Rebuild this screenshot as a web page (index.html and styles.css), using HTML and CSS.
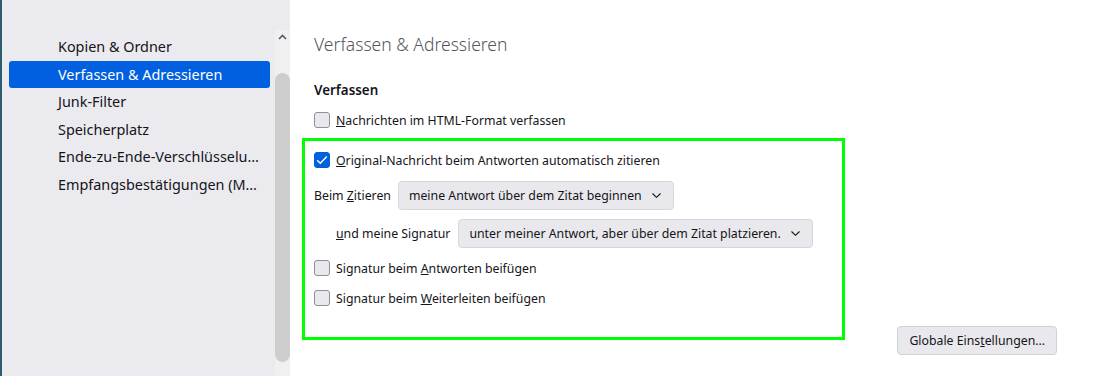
FILE: index.html
```html
<!DOCTYPE html>
<html lang="de">
<head>
    <meta charset="UTF-8">
    <title>Einstellungen - Verfassen &amp; Adressieren</title>
    <link rel="stylesheet" href="styles.css">
</head>
<body>

    <div class="window">
        <div class="sidebar">
            <ul class="nav">
                <li class="nav-item">Kopien &amp; Ordner</li>
                <li class="nav-item selected">Verfassen &amp; Adressieren</li>
                <li class="nav-item">Junk-Filter</li>
                <li class="nav-item">Speicherplatz</li>
                <li class="nav-item">Ende-zu-Ende-Verschlüsselu…</li>
                <li class="nav-item">Empfangsbestätigungen (M…</li>
            </ul>
            <div class="scrollbar">
                <div class="scroll-arrow">
                    <svg width="9" height="6" viewBox="0 0 9 6"><path d="M1 5 L4.5 1.5 L8 5" fill="none" stroke="#5b5b66" stroke-width="1.6"/></svg>
                </div>
                <div class="scroll-track">
                    <div class="scroll-thumb"></div>
                </div>
            </div>
        </div>

        <div class="content">
            <h1 class="page-title">Verfassen &amp; Adressieren</h1>
            <h2 class="section-title">Verfassen</h2>

            <label class="check-row">
                <span class="checkbox"></span>
                <span><u>N</u>achrichten im HTML-Format verfassen</span>
            </label>

            <div class="group">
                <label class="check-row">
                    <span class="checkbox checked">
                        <svg width="12" height="10" viewBox="0 0 12 10"><path d="M1.2 5.2 L4.3 8.2 L10.8 1.4" fill="none" stroke="#fff" stroke-width="1.4"/></svg>
                    </span>
                    <span><u>O</u>riginal-Nachricht beim Antworten automatisch zitieren</span>
                </label>

                <div class="select-row">
                    <span class="select-label">Beim <u>Z</u>itieren</span>
                    <div class="select">
                        <span>meine Antwort über dem Zitat beginnen</span>
                        <svg width="9" height="5" viewBox="0 0 9 5"><path d="M0.5 0.5 L4.5 4.3 L8.5 0.5" fill="none" stroke="#15141a" stroke-width="1.1"/></svg>
                    </div>
                </div>

                <div class="select-row indented">
                    <span class="select-label"><u>u</u>nd meine Signatur</span>
                    <div class="select">
                        <span>unter meiner Antwort, aber über dem Zitat platzieren.</span>
                        <svg width="9" height="5" viewBox="0 0 9 5"><path d="M0.5 0.5 L4.5 4.3 L8.5 0.5" fill="none" stroke="#15141a" stroke-width="1.1"/></svg>
                    </div>
                </div>

                <label class="check-row">
                    <span class="checkbox"></span>
                    <span>Signatur beim <u>A</u>ntworten beifügen</span>
                </label>

                <label class="check-row">
                    <span class="checkbox"></span>
                    <span>Signatur beim <u>W</u>eiterleiten beifügen</span>
                </label>
            </div>

            <div class="actions">
                <button class="btn">Globale Eins<u>t</u>ellungen…</button>
            </div>
        </div>
    </div>

</body>
</html>
```

FILE: styles.css
```css
body {
    margin: 0;
    font-family: "Noto Sans", "Open Sans", sans-serif;
    font-size: 12.3px;
    color: #15141a;
    background: #ffffff;
}
.window {
    display: flex;
    height: 376px;
    overflow: hidden;
}
.sidebar {
    display: flex;
    width: 288px;
    background: #ebeaef;
    border-left: 2px solid #2b5d6e;
}
.nav {
    list-style: none;
    margin: 0;
    padding: 33px 5px 0 7px;
    flex: 1;
    font-size: 14.4px;
}
.nav-item {
    height: 27.6px;
    line-height: 27.6px;
    padding-left: 49px;
    white-space: nowrap;
    border-radius: 3px;
}
.nav-item.selected {
    background: #0060df;
    color: #ffffff;
}
.scrollbar {
    width: 15px;
    display: flex;
    flex-direction: column;
    padding-top: 30px;
}
.scroll-arrow {
    height: 14px;
    display: flex;
    justify-content: center;
    align-items: center;
    background: #f0f0f0;
}
.scroll-track {
    flex: 1;
    background: #f0f0f0;
    padding-top: 29px;
}
.scroll-thumb {
    height: 289px;
    background: #cdcdcd;
    border-radius: 8px;
}
.content {
    flex: 1;
    padding: 0 53px 0 24px;
}
.page-title {
    margin: 31px 0 0;
    font-size: 17.5px;
    font-weight: 300;
    line-height: 26px;
    color: #55555e;
}
.section-title {
    margin: 23px 0 0;
    font-size: 13.4px;
    font-weight: 600;
    line-height: 20px;
}
.check-row {
    display: flex;
    align-items: center;
    gap: 6px;
    height: 20px;
    margin-top: 10px;
    white-space: nowrap;
}
.checkbox {
    width: 14px;
    height: 14px;
    border: 1px solid #8f8f9d;
    border-radius: 3px;
    background: #e9e9ed;
    display: flex;
    align-items: center;
    justify-content: center;
    flex-shrink: 0;
}
.checkbox.checked {
    background: #0060df;
    border-color: #0060df;
}
.group {
    position: relative;
    width: 531px;
    margin-top: 20px;
}
.group::after {
    content: "";
    position: absolute;
    top: -12px;
    bottom: -32px;
    left: -12px;
    right: 0;
    border: 3px solid #00ff00;
    pointer-events: none;
}
.group > .check-row:first-child {
    margin-top: 0;
}
.select-row {
    display: flex;
    align-items: center;
    gap: 7px;
    margin-top: 11px;
}
.select-row.indented {
    padding-left: 22px;
    gap: 8px;
    margin-top: 9px;
}
.select-label {
    white-space: nowrap;
}
.select {
    display: flex;
    align-items: center;
    gap: 10px;
    height: 27px;
    padding: 0 12px 0 10px;
    background: #e9e9ed;
    border: 1px solid #d6d6dc;
    border-radius: 4px;
    white-space: nowrap;
}
.actions {
    display: flex;
    justify-content: flex-end;
    margin-top: 18px;
}
.btn {
    font-family: inherit;
    font-size: 12.3px;
    color: #15141a;
    height: 29px;
    padding: 0 11px;
    background: #e9e9ed;
    border: 1px solid #d0d0d7;
    border-radius: 4px;
}
```
